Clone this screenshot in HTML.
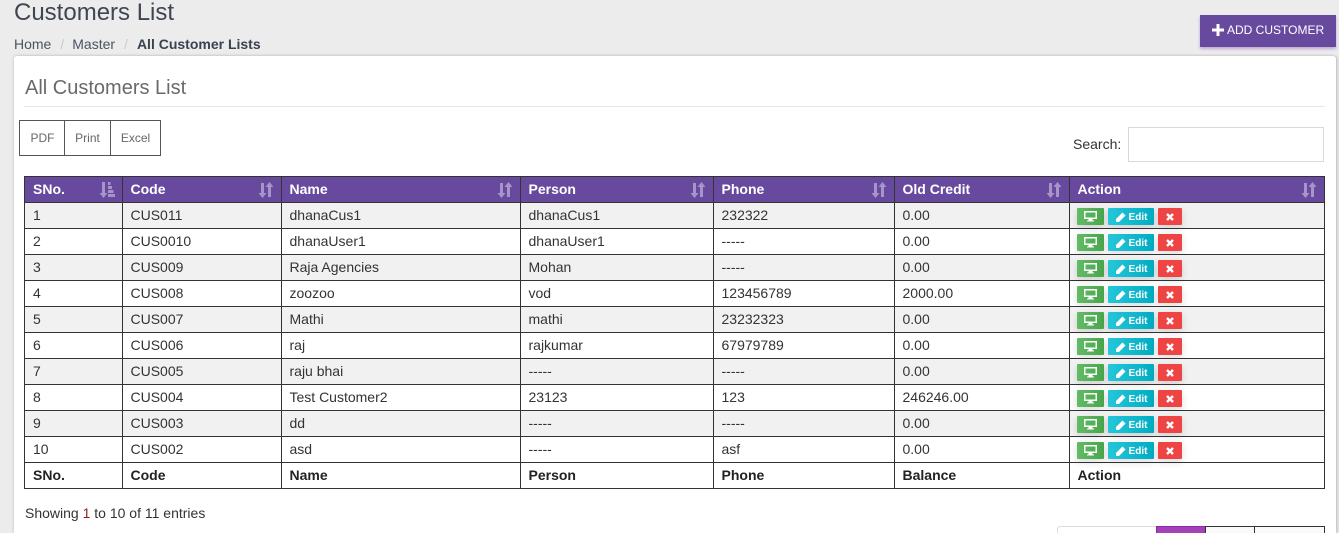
<!DOCTYPE html>
<html><head><meta charset="utf-8"><style>
*{box-sizing:border-box}
html,body{margin:0;padding:0;width:1339px;height:533px;overflow:hidden;background:#ececec;font-family:"Liberation Sans",sans-serif;color:#333}
#wrap{position:relative;width:1339px;height:533px;overflow:hidden;background:#ececec}
.a{position:absolute;white-space:nowrap}
#card{position:absolute;left:14px;top:56px;width:1322px;height:477px;background:#fff;border-radius:3px 3px 0 0;box-shadow:0 0 3px rgba(0,0,0,.2),2px 0 2px rgba(0,0,0,.08)}
table{position:absolute;left:24px;top:176px;width:1300px;border-collapse:collapse;table-layout:fixed;font-size:14px;color:#333}
td,th{border:1px solid #333;height:26px;padding:0 0 0 7.5px;text-align:left;position:relative;white-space:nowrap;line-height:24px;vertical-align:top}
td:first-child,th:first-child{padding-left:8px}
thead th{background:#674a9e;color:#fff;font-size:14px}
tbody tr:nth-child(odd) td{background:#f1f1f1}
tfoot th{color:#222}
.s{position:absolute;right:7px;top:5px}
.b{position:absolute;top:5px;height:17px;border-radius:1px;box-shadow:0 3px 8px rgba(0,0,0,.14);color:#fff;font-weight:700;font-size:10px;line-height:20px;text-align:center}
.g{left:7px;width:27px;background:linear-gradient(90deg,#63bb66,#48a64c)}
.c{left:38px;width:46px;background:linear-gradient(90deg,#26c6da,#00acc1)}
.r{left:88px;width:24px;background:#ef4444}
.b svg{position:absolute}
</style></head><body><div id="wrap">
<div class="a" style="left:14px;top:-2px;font-size:24px;line-height:30px;color:#3f4652">Customers List</div>
<div class="a" style="left:14px;top:36px;font-size:14px;line-height:17px;color:#4a5362">Home<span style="color:#ccc;padding:0 8px 0 9px">/</span>Master<span style="color:#ccc;padding:0 9px 0 9px">/</span><b style="color:#3a4250">All Customer Lists</b></div>
<div class="a" style="left:1200px;top:15px;width:136px;height:32px;background:#674a9e;box-shadow:0 2px 3px rgba(120,60,170,.4);color:#fff;font-size:12px;line-height:31px;padding-left:27px">ADD CUSTOMER<svg style="position:absolute;left:12px;top:9px" width="12" height="12" viewBox="0 0 12 12"><path d="M4.500 0h3v4.500h4.500v3h-4.500v4.500h-3v-4.500h-4.500v-3h4.500z" fill="#fff"/></svg></div>
<div id="card"></div>
<div class="a" style="left:25px;top:76px;font-size:20px;line-height:24px;color:#6a6a6a">All Customers List</div>
<div class="a" style="left:24px;top:106px;width:1301px;height:1px;background:#e8e8e8"></div>
<div class="a" style="left:19px;top:120px;width:142px;height:36px;border:1px solid #555;font-size:12px;line-height:34px;color:#666">
<span class="a" style="left:0;top:0;width:45px;height:34px;border-right:1px solid #555;text-align:center;padding-left:1px">PDF</span>
<span class="a" style="left:45px;top:0;width:46px;height:34px;border-right:1px solid #555;text-align:center">Print</span>
<span class="a" style="left:91px;top:0;width:49px;height:34px;text-align:center">Excel</span></div>
<div class="a" style="left:1073px;top:136px;font-size:14px;line-height:16px;color:#333">Search:</div>
<div class="a" style="left:1128px;top:127px;width:196px;height:35px;border:1px solid #d9d9d9;background:#fff"></div>
<table><colgroup><col style="width:98px"><col style="width:159px"><col style="width:239px"><col style="width:193px"><col style="width:181px"><col style="width:175px"><col style="width:255px"></colgroup>
<thead><tr>
<th>SNo.<svg class="s" width="16" height="16" viewBox="0 0 16 16" fill="#a595c8"><path d="M3 0h3v11h2.500l-4 5-4-5h2.500z"/><path d="M9 0h2.500v3h-2.500zM9 4h4v3h-4zM9 8h5.500v3h-5.500zM9 12h7v3h-7z"/></svg></th>
<th>Code<svg class="s" width="16" height="16" viewBox="0 0 16 16" fill="#a595c8"><path d="M3 1h3v10h2.500l-4 5-4-5h2.500z"/><path d="M10 15h3v-10h2.500l-4-5-4 5h2.500z"/></svg></th>
<th>Name<svg class="s" width="16" height="16" viewBox="0 0 16 16" fill="#a595c8"><path d="M3 1h3v10h2.500l-4 5-4-5h2.500z"/><path d="M10 15h3v-10h2.500l-4-5-4 5h2.500z"/></svg></th>
<th>Person<svg class="s" width="16" height="16" viewBox="0 0 16 16" fill="#a595c8"><path d="M3 1h3v10h2.500l-4 5-4-5h2.500z"/><path d="M10 15h3v-10h2.500l-4-5-4 5h2.500z"/></svg></th>
<th>Phone<svg class="s" width="16" height="16" viewBox="0 0 16 16" fill="#a595c8"><path d="M3 1h3v10h2.500l-4 5-4-5h2.500z"/><path d="M10 15h3v-10h2.500l-4-5-4 5h2.500z"/></svg></th>
<th>Old Credit<svg class="s" width="16" height="16" viewBox="0 0 16 16" fill="#a595c8"><path d="M3 1h3v10h2.500l-4 5-4-5h2.500z"/><path d="M10 15h3v-10h2.500l-4-5-4 5h2.500z"/></svg></th>
<th>Action<svg class="s" width="16" height="16" viewBox="0 0 16 16" fill="#a595c8"><path d="M3 1h3v10h2.500l-4 5-4-5h2.500z"/><path d="M10 15h3v-10h2.500l-4-5-4 5h2.500z"/></svg></th>
</tr></thead>
<tbody>
<tr><td>1</td><td>CUS011</td><td>dhanaCus1</td><td>dhanaCus1</td><td>232322</td><td>0.00</td><td><span class="b g"><svg style="left:7px;top:3px" width="13" height="11" viewBox="0 0 13 11"><path d="M0 0h13v8h-4.500v1.500h1.500v1h-7v-1h1.500v-1.500h-4.500zM1.500 1.500v5h10v-5z" fill="#fff"/></svg></span><span class="b c"><svg style="left:8px;top:4px" width="10" height="10" viewBox="0 0 10 10"><path d="M0 10v-3l6.500-6.500 3 3-6.500 6.500z" fill="#fff"/></svg><span style="padding-left:14px">Edit</span></span><span class="b r"><svg style="left:8px;top:5px" width="8" height="8" viewBox="0 0 8 8"><path d="M1 1l6 6M7 1l-6 6" stroke="#fff" stroke-width="2.400"/></svg></span></td></tr>
<tr><td>2</td><td>CUS0010</td><td>dhanaUser1</td><td>dhanaUser1</td><td>-----</td><td>0.00</td><td><span class="b g"><svg style="left:7px;top:3px" width="13" height="11" viewBox="0 0 13 11"><path d="M0 0h13v8h-4.500v1.500h1.500v1h-7v-1h1.500v-1.500h-4.500zM1.500 1.500v5h10v-5z" fill="#fff"/></svg></span><span class="b c"><svg style="left:8px;top:4px" width="10" height="10" viewBox="0 0 10 10"><path d="M0 10v-3l6.500-6.500 3 3-6.500 6.500z" fill="#fff"/></svg><span style="padding-left:14px">Edit</span></span><span class="b r"><svg style="left:8px;top:5px" width="8" height="8" viewBox="0 0 8 8"><path d="M1 1l6 6M7 1l-6 6" stroke="#fff" stroke-width="2.400"/></svg></span></td></tr>
<tr><td>3</td><td>CUS009</td><td>Raja Agencies</td><td>Mohan</td><td>-----</td><td>0.00</td><td><span class="b g"><svg style="left:7px;top:3px" width="13" height="11" viewBox="0 0 13 11"><path d="M0 0h13v8h-4.500v1.500h1.500v1h-7v-1h1.500v-1.500h-4.500zM1.500 1.500v5h10v-5z" fill="#fff"/></svg></span><span class="b c"><svg style="left:8px;top:4px" width="10" height="10" viewBox="0 0 10 10"><path d="M0 10v-3l6.500-6.500 3 3-6.500 6.500z" fill="#fff"/></svg><span style="padding-left:14px">Edit</span></span><span class="b r"><svg style="left:8px;top:5px" width="8" height="8" viewBox="0 0 8 8"><path d="M1 1l6 6M7 1l-6 6" stroke="#fff" stroke-width="2.400"/></svg></span></td></tr>
<tr><td>4</td><td>CUS008</td><td>zoozoo</td><td>vod</td><td>123456789</td><td>2000.00</td><td><span class="b g"><svg style="left:7px;top:3px" width="13" height="11" viewBox="0 0 13 11"><path d="M0 0h13v8h-4.500v1.500h1.500v1h-7v-1h1.500v-1.500h-4.500zM1.500 1.500v5h10v-5z" fill="#fff"/></svg></span><span class="b c"><svg style="left:8px;top:4px" width="10" height="10" viewBox="0 0 10 10"><path d="M0 10v-3l6.500-6.500 3 3-6.500 6.500z" fill="#fff"/></svg><span style="padding-left:14px">Edit</span></span><span class="b r"><svg style="left:8px;top:5px" width="8" height="8" viewBox="0 0 8 8"><path d="M1 1l6 6M7 1l-6 6" stroke="#fff" stroke-width="2.400"/></svg></span></td></tr>
<tr><td>5</td><td>CUS007</td><td>Mathi</td><td>mathi</td><td>23232323</td><td>0.00</td><td><span class="b g"><svg style="left:7px;top:3px" width="13" height="11" viewBox="0 0 13 11"><path d="M0 0h13v8h-4.500v1.500h1.500v1h-7v-1h1.500v-1.500h-4.500zM1.500 1.500v5h10v-5z" fill="#fff"/></svg></span><span class="b c"><svg style="left:8px;top:4px" width="10" height="10" viewBox="0 0 10 10"><path d="M0 10v-3l6.500-6.500 3 3-6.500 6.500z" fill="#fff"/></svg><span style="padding-left:14px">Edit</span></span><span class="b r"><svg style="left:8px;top:5px" width="8" height="8" viewBox="0 0 8 8"><path d="M1 1l6 6M7 1l-6 6" stroke="#fff" stroke-width="2.400"/></svg></span></td></tr>
<tr><td>6</td><td>CUS006</td><td>raj</td><td>rajkumar</td><td>67979789</td><td>0.00</td><td><span class="b g"><svg style="left:7px;top:3px" width="13" height="11" viewBox="0 0 13 11"><path d="M0 0h13v8h-4.500v1.500h1.500v1h-7v-1h1.500v-1.500h-4.500zM1.500 1.500v5h10v-5z" fill="#fff"/></svg></span><span class="b c"><svg style="left:8px;top:4px" width="10" height="10" viewBox="0 0 10 10"><path d="M0 10v-3l6.500-6.500 3 3-6.500 6.500z" fill="#fff"/></svg><span style="padding-left:14px">Edit</span></span><span class="b r"><svg style="left:8px;top:5px" width="8" height="8" viewBox="0 0 8 8"><path d="M1 1l6 6M7 1l-6 6" stroke="#fff" stroke-width="2.400"/></svg></span></td></tr>
<tr><td>7</td><td>CUS005</td><td>raju bhai</td><td>-----</td><td>-----</td><td>0.00</td><td><span class="b g"><svg style="left:7px;top:3px" width="13" height="11" viewBox="0 0 13 11"><path d="M0 0h13v8h-4.500v1.500h1.500v1h-7v-1h1.500v-1.500h-4.500zM1.500 1.500v5h10v-5z" fill="#fff"/></svg></span><span class="b c"><svg style="left:8px;top:4px" width="10" height="10" viewBox="0 0 10 10"><path d="M0 10v-3l6.500-6.500 3 3-6.500 6.500z" fill="#fff"/></svg><span style="padding-left:14px">Edit</span></span><span class="b r"><svg style="left:8px;top:5px" width="8" height="8" viewBox="0 0 8 8"><path d="M1 1l6 6M7 1l-6 6" stroke="#fff" stroke-width="2.400"/></svg></span></td></tr>
<tr><td>8</td><td>CUS004</td><td>Test Customer2</td><td>23123</td><td>123</td><td>246246.00</td><td><span class="b g"><svg style="left:7px;top:3px" width="13" height="11" viewBox="0 0 13 11"><path d="M0 0h13v8h-4.500v1.500h1.500v1h-7v-1h1.500v-1.500h-4.500zM1.500 1.500v5h10v-5z" fill="#fff"/></svg></span><span class="b c"><svg style="left:8px;top:4px" width="10" height="10" viewBox="0 0 10 10"><path d="M0 10v-3l6.500-6.500 3 3-6.500 6.500z" fill="#fff"/></svg><span style="padding-left:14px">Edit</span></span><span class="b r"><svg style="left:8px;top:5px" width="8" height="8" viewBox="0 0 8 8"><path d="M1 1l6 6M7 1l-6 6" stroke="#fff" stroke-width="2.400"/></svg></span></td></tr>
<tr><td>9</td><td>CUS003</td><td>dd</td><td>-----</td><td>-----</td><td>0.00</td><td><span class="b g"><svg style="left:7px;top:3px" width="13" height="11" viewBox="0 0 13 11"><path d="M0 0h13v8h-4.500v1.500h1.500v1h-7v-1h1.500v-1.500h-4.500zM1.500 1.500v5h10v-5z" fill="#fff"/></svg></span><span class="b c"><svg style="left:8px;top:4px" width="10" height="10" viewBox="0 0 10 10"><path d="M0 10v-3l6.500-6.500 3 3-6.500 6.500z" fill="#fff"/></svg><span style="padding-left:14px">Edit</span></span><span class="b r"><svg style="left:8px;top:5px" width="8" height="8" viewBox="0 0 8 8"><path d="M1 1l6 6M7 1l-6 6" stroke="#fff" stroke-width="2.400"/></svg></span></td></tr>
<tr><td>10</td><td>CUS002</td><td>asd</td><td>-----</td><td>asf</td><td>0.00</td><td><span class="b g"><svg style="left:7px;top:3px" width="13" height="11" viewBox="0 0 13 11"><path d="M0 0h13v8h-4.500v1.500h1.500v1h-7v-1h1.500v-1.500h-4.500zM1.500 1.500v5h10v-5z" fill="#fff"/></svg></span><span class="b c"><svg style="left:8px;top:4px" width="10" height="10" viewBox="0 0 10 10"><path d="M0 10v-3l6.500-6.500 3 3-6.500 6.500z" fill="#fff"/></svg><span style="padding-left:14px">Edit</span></span><span class="b r"><svg style="left:8px;top:5px" width="8" height="8" viewBox="0 0 8 8"><path d="M1 1l6 6M7 1l-6 6" stroke="#fff" stroke-width="2.400"/></svg></span></td></tr>
</tbody>
<tfoot><tr><th>SNo.</th><th>Code</th><th>Name</th><th>Person</th><th>Phone</th><th>Balance</th><th>Action</th></tr></tfoot>
</table>
<div class="a" style="left:25px;top:505px;font-size:14px;line-height:16px;color:#333">Showing <span style="color:#8a1f1f">1</span> to 10 of 11 entries</div>
<div class="a" style="left:1057px;top:526px;width:100px;height:12px;border:1px solid #ddd;border-radius:3px 0 0 0;background:#fff"></div>
<div class="a" style="left:1156px;top:526px;width:50px;height:12px;background:#a541b8;border:1px solid #8e2aa6"></div>
<div class="a" style="left:1205px;top:526px;width:50px;height:12px;background:#fafafa;border:1px solid #333"></div>
<div class="a" style="left:1254px;top:526px;width:71px;height:12px;background:#fafafa;border:1px solid #333"></div>
</div></body></html>
